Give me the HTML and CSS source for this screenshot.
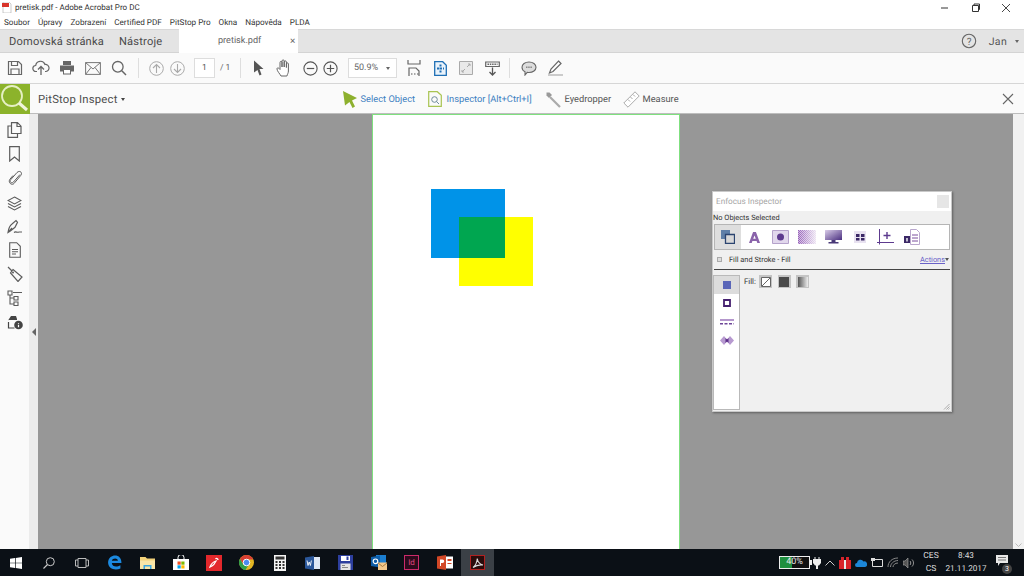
FILE: index.html
```html
<!DOCTYPE html>
<html lang="cs">
<head>
<meta charset="utf-8">
<title>pretisk.pdf - Adobe Acrobat Pro DC</title>
<link rel="stylesheet" href="styles.css">
</head>
<body>
<div class="app">
  <header class="titlebar">
    <svg class="pdficon" viewBox="0 0 10 11" width="10" height="11"><path d="M1 0h6l2 2v9H1z" fill="#fff" stroke="#aaa" stroke-width=".6"/><path d="M0 1h7v4H0z" fill="#d8342a"/></svg>
    <span class="apptitle">pretisk.pdf - Adobe Acrobat Pro DC</span>
    <div class="winctl">
      <svg width="10" height="10" viewBox="0 0 10 10"><path d="M1 5h7" stroke="#333"/></svg>
      <svg width="10" height="10" viewBox="0 0 10 10"><path d="M1.500 2.500h6v6h-6zM3 2.500V1h5.500v5.500H7.500" fill="none" stroke="#333"/></svg>
      <svg width="10" height="10" viewBox="0 0 10 10"><path d="M1 1l8 8M9 1l-8 8" stroke="#333" stroke-width=".9"/></svg>
    </div>
  </header>
  <nav class="menubar">
    <span>Soubor</span><span>Úpravy</span><span>Zobrazení</span><span>Certified PDF</span><span>PitStop Pro</span><span>Okna</span><span>Nápověda</span><span>PLDA</span>
  </nav>
  <div class="tabbar">
    <span class="tabhead home">Domovská stránka</span>
    <span class="tabhead tools">Nástroje</span>
    <div class="doctab"><span class="docname">pretisk.pdf</span><span class="docclose">×</span></div>
    <div class="tabright">
      <svg width="16" height="16" viewBox="0 0 16 16"><circle cx="8" cy="8" r="6.700" fill="none" stroke="#666" stroke-width="1.100"/><text x="8" y="11.500" text-anchor="middle" class="qmark">?</text></svg>
      <span class="user">Jan</span><span class="caret"></span>
    </div>
  </div>
  <div class="toolbar">
    <span class="tool"><svg width="16" height="16" viewBox="0 0 16 16"><path d="M1.500 1.500h10l3 3v10h-13zM4.500 1.500v4h6v-4M4 14.500v-5.500h8v5.500" fill="none" stroke="#666" stroke-width="1.200"/></svg></span>
    <span class="tool"><svg width="18" height="16" viewBox="0 0 18 16"><path d="M5 11.500H4a3 3 0 0 1-.3-6A4.800 4.800 0 0 1 13 4.500a3.500 3.500 0 0 1 1 7h-1" fill="none" stroke="#666" stroke-width="1.200"/><path d="M9 15V7M6 9.500L9 6.500l3 3" fill="none" stroke="#666" stroke-width="1.300"/></svg></span>
    <span class="tool"><svg width="16" height="16" viewBox="0 0 16 16"><path d="M4 1h8v4H4zM1 5.500h14v6h-3v3H4v-3H1z" fill="#666"/><path d="M5 10h6v3.500H5z" fill="#fff"/></svg></span>
    <span class="tool"><svg width="16" height="13" viewBox="0 0 16 13"><path d="M.6.600h14.800v11.800H.6zM.6.600L8 7l7.400-6.400M.6 12.400L6 5.500M15.400 12.400L10 5.500" fill="none" stroke="#777" stroke-width="1"/></svg></span>
    <span class="tool"><svg width="16" height="16" viewBox="0 0 16 16"><circle cx="6.800" cy="6.800" r="5.300" fill="none" stroke="#666" stroke-width="1.300"/><path d="M10.800 10.800L15 15" stroke="#666" stroke-width="1.500"/></svg></span>
    <span class="sep sep-a"></span>
    <span class="navbtn"><svg width="15" height="15" viewBox="0 0 15 15"><circle cx="7.500" cy="7.500" r="6.800" fill="none" stroke="#aaa"/><path d="M7.500 12V3.500M4 7l3.500-3.500L11 7" fill="none" stroke="#aaa" stroke-width="1.100"/></svg></span>
    <span class="navbtn"><svg width="15" height="15" viewBox="0 0 15 15"><circle cx="7.500" cy="7.500" r="6.800" fill="none" stroke="#aaa"/><path d="M7.500 3v8.500M4 8l3.500 3.500L11 8" fill="none" stroke="#aaa" stroke-width="1.100"/></svg></span>
    <span class="pagebox">1</span>
    <span class="pagetotal">/ 1</span>
    <span class="sep sep-b"></span>
    <span class="tool"><svg width="11" height="16" viewBox="0 0 11 16"><path d="M1 .500l9.500 8.500H6.500l2 5.500-2 1L4.500 10 1 12.500z" fill="#555"/></svg></span>
    <span class="tool"><svg width="17" height="18" viewBox="0 0 17 18"><path d="M5 17c-1-2-4-5-4-7s2-1 3 .5V3.500c0-1.500 2-1.500 2 0V8V2c0-1.500 2.200-1.500 2.200 0v6V3c0-1.500 2.200-1.500 2.200 0v5.500V5c0-1.500 2-1.500 2 0v7c0 2-1 3-1.500 5z" fill="#fff" stroke="#666" stroke-width="1"/></svg></span>
    <span class="zoomctl minus"><svg width="15" height="15" viewBox="0 0 15 15"><circle cx="7.500" cy="7.500" r="6.600" fill="none" stroke="#555" stroke-width="1.100"/><path d="M3.800 7.500h7.400" stroke="#555" stroke-width="1.200"/></svg></span>
    <span class="zoomctl"><svg width="15" height="15" viewBox="0 0 15 15"><circle cx="7.500" cy="7.500" r="6.600" fill="none" stroke="#555" stroke-width="1.100"/><path d="M3.800 7.500h7.400M7.500 3.800v7.400" stroke="#555" stroke-width="1.200"/></svg></span>
    <span class="zoombox"><span>50.9%</span><span class="caret"></span></span>
    <span class="tool fit"><svg width="14" height="18" viewBox="0 0 14 18"><path d="M1 1v4h12V1M2 17V9h7l3 3v5" fill="none" stroke="#666" stroke-width="1.200"/><path d="M4 15h1.500M7 15h1.500M10 15h1.500" stroke="#555"/></svg></span>
    <span class="tool"><svg width="13" height="15" viewBox="0 0 13 15"><path d="M.7.700h8l3.600 3.500v10.100H.700z" fill="#eaf3fb" stroke="#1f6fb5" stroke-width="1.300"/><path d="M6.500 3.500v8M3 7.500h7" stroke="#1f6fb5" stroke-width="2" stroke-dasharray="2 1"/></svg></span>
    <span class="tool"><svg width="14" height="14" viewBox="0 0 14 14"><path d="M.500.500h13v13H.500z" fill="#e9e9e9" stroke="#aaa"/><path d="M8 6l3-3M9 3h2v2M6 8l-3 3M5 11H3V9" fill="none" stroke="#aaa"/></svg></span>
    <span class="tool"><svg width="15" height="15" viewBox="0 0 15 15"><path d="M.700 1h13.600v4.500H.700z" fill="none" stroke="#666" stroke-width="1.200"/><path d="M2.500 3.200h10" stroke="#666" stroke-width="1.500" stroke-dasharray="1.500 .8"/><path d="M7.500 6.500v7.500M4.500 11l3 3 3-3" fill="none" stroke="#555" stroke-width="1.300"/></svg></span>
    <span class="sep sep-c"></span>
    <span class="tool"><svg width="16" height="15" viewBox="0 0 16 15"><path d="M8 1c4 0 7 2.300 7 5.300s-3 5.200-7 5.200c-.6 0-1.200 0-1.800-.2L4 14v-3.300C2 9.800 1 8.200 1 6.300 1 3.300 4 1 8 1z" fill="#ddd" stroke="#666" stroke-width="1.100"/><path d="M5 6.300h6" stroke="#888" stroke-width="1.500" stroke-dasharray="1.500 .7"/></svg></span>
    <span class="tool"><svg width="17" height="16" viewBox="0 0 17 16"><path d="M1 15h15" stroke="#bbb" stroke-width="1.500"/><path d="M11.500 1L14 3.500 6 11.500l-3.500 1.500L4 9z" fill="#fff" stroke="#666" stroke-width="1.200"/></svg></span>
  </div>
  <div class="inspectbar">
    <span class="logo"><svg width="30" height="30" viewBox="0 0 30 30"><circle cx="12" cy="12" r="10" fill="none" stroke="#e6f0c4" stroke-width="1.800"/><path d="M19 19l8 7" stroke="#f0f5dc" stroke-width="3"/></svg></span>
    <span class="inspecttitle">PitStop Inspect</span><span class="caret dark"></span>
    <div class="modes">
      <svg class="m1" width="14" height="17" viewBox="0 0 14 17"><path d="M0 0l14 7-5 2.500 3 6-2.500 1.500-3-6L2 14.500z" fill="#8db02e"/></svg>
      <span class="modelink t1">Select Object</span>
      <svg class="m2" width="14" height="16" viewBox="0 0 14 16"><path d="M.700.700h8.600l4 3.600v11H.700z" fill="none" stroke="#a9c452" stroke-width="1.200"/><circle cx="6.500" cy="8.500" r="2.800" fill="none" stroke="#6f8b9c"/><path d="M8.500 10.500l2.500 2.500" stroke="#6f8b9c"/></svg>
      <span class="modelink t2">Inspector [Alt+Ctrl+I]</span>
      <svg class="m3" width="17" height="17" viewBox="0 0 17 17"><path d="M1.500 1.500l3 0 2.500 2.500-3 3L1.500 4.500z" fill="#999"/><path d="M5 6l10 10" stroke="#aaa" stroke-width="2.200"/></svg>
      <span class="modegrey t3">Eyedropper</span>
      <svg class="m4" width="17" height="17" viewBox="0 0 17 17"><path d="M12 .800L16.200 5 5 16.200.800 12z" fill="#fff" stroke="#aaa"/><path d="M10 3.500l2 2M7.500 6l2 2M5 8.500l2 2" stroke="#aaa"/></svg>
      <span class="modegrey t4">Measure</span>
    </div>
    <svg class="closex" width="12" height="12" viewBox="0 0 12 12"><path d="M1 1l10 10M11 1L1 11" stroke="#666" stroke-width="1.100"/></svg>
  </div>
  <main class="workarea">
    <aside class="sidebar">
      <svg width="15" height="16" viewBox="0 0 15 16"><path d="M4.500 .700h6l3.500 3.500v7.300H4.500zM4.500 4H1v11.300h9.500v-3.800M10 1v3.500h4" fill="none" stroke="#5c5c5c" stroke-width="1.200"/></svg>
      <svg width="11" height="16" viewBox="0 0 11 16"><path d="M.700.700h9.600v14.300L5.500 11 .700 15z" fill="none" stroke="#5c5c5c" stroke-width="1.200"/></svg>
      <svg width="14" height="16" viewBox="0 0 14 16"><path d="M12 4.500L5.500 12c-2 2-4.500-.3-2.800-2.300L9 2.500c3-2.800 6 .5 3.700 3L6 13.500c-2 2.200-6-.5-4.300-4L5 5.500" fill="none" stroke="#5c5c5c" stroke-width="1"/></svg>
      <svg class="layers" width="15" height="15" viewBox="0 0 15 15"><path d="M7.500 1L14 4.500 7.500 8 1 4.500zM1 7.500L7.500 11 14 7.500M1 10.500L7.500 14 14 10.500" fill="none" stroke="#5c5c5c" stroke-width="1.100"/></svg>
      <svg width="16" height="15" viewBox="0 0 16 15"><path d="M1 13.500C1.500 10 3 6.500 5 5l4-3.500 1.500 1.800-2.500 5c-2 1.800-4.500 3.500-7 5.200zM5 9l-4 4.500M7 13.500c2-1.500 3 .5 5-.5h3" fill="none" stroke="#5c5c5c" stroke-width="1.200"/></svg>
      <svg width="12" height="16" viewBox="0 0 12 16"><path d="M.700.700h7l3.600 3.600v11H.700zM3 7.500h6M3 9.800h6M3 12h4" fill="none" stroke="#5c5c5c" stroke-width="1.100"/></svg>
      <svg width="16" height="16" viewBox="0 0 16 16"><path d="M6 3.500l9 7.500-4 4.500-7.500-8.500zM1 1l4 4" fill="none" stroke="#5c5c5c" stroke-width="1.200"/><circle cx="6" cy="6.500" r="1" fill="#5c5c5c"/></svg>
      <svg width="16" height="16" viewBox="0 0 16 16"><path d="M1 1h4v4H1zM7 6.500h4v3.500H7zM7 12h4v3.500H7zM3 5v3H7M3 8v6H7M6 2.500h9" fill="none" stroke="#5c5c5c" stroke-width="1.100"/></svg>
      <svg width="16" height="16" viewBox="0 0 16 16"><path d="M1 6.500L4 2h5l1 3v1H1z" fill="#444"/><path d="M1.500 8v6h6" fill="none" stroke="#444" stroke-width="1.200"/><circle cx="11.500" cy="11" r="4.300" fill="#444"/><path d="M11.500 9v.8M11.500 10.800v2.500" stroke="#fff" stroke-width="1.200"/></svg>
    </aside>
    <div class="collapse"><span class="tri"></span></div>
    <div class="canvas">
      <div class="page">
        <div class="sq blue"></div>
        <div class="sq yellow"></div>
        <div class="sq green"></div>
      </div>
      <section class="panel">
        <div class="phead"><span>Enfocus Inspector</span><span class="pclose"></span></div>
        <div class="pstatus">No Objects Selected</div>
        <div class="picons">
          <span class="pi active"><svg width="14" height="14" viewBox="0 0 14 14"><path d="M0 0h9v9H0z" fill="#5f7fa8"/><path d="M4.500 4.500h9v9h-9z" fill="#d8d8d8" stroke="#2b4470" stroke-width="1.300"/></svg></span>
          <span class="pi"><svg width="11" height="11" viewBox="0 0 13 13"><path d="M4.800 0h3.400L13 13H9.800l-.8-2.500H4L3.200 13H0zM6.500 4L5 8h3z" fill="#8a63aa"/></svg></span>
          <span class="pi"><svg width="17" height="14" viewBox="0 0 17 14"><path d="M.500.500h16v13H.500z" fill="#e1d7ec" stroke="#b5a2cb"/><circle cx="8.500" cy="7" r="3.500" fill="#5d3a8e"/></svg></span>
          <span class="pi"><svg width="18" height="14" viewBox="0 0 18 14"><defs><pattern id="chk" width="2" height="2" patternUnits="userSpaceOnUse"><path d="M0 0h1v1H0zM1 1h1v1H1z" fill="#8a4fb0"/></pattern><linearGradient id="fd"><stop offset="0" stop-color="#fff" stop-opacity=".1"/><stop offset="1" stop-color="#fff" stop-opacity=".85"/></linearGradient></defs><path d="M0 0h18v14H0z" fill="#c9aedd"/><path d="M0 0h18v14H0z" fill="url(#chk)"/><path d="M0 0h18v14H0z" fill="url(#fd)"/></svg></span>
          <span class="pi"><svg width="17" height="14" viewBox="0 0 17 14"><defs><linearGradient id="scr" x1="0" y1="0" x2="1" y2="1"><stop offset="0" stop-color="#d9cce8"/><stop offset="1" stop-color="#4a2f80"/></linearGradient></defs><path d="M0 0h17v10H0z" fill="url(#scr)"/><path d="M6.500 10h4v2h3v1.500h-10V12h3z" fill="#4a3a78"/></svg></span>
          <span class="pi"><svg width="12" height="12" viewBox="0 0 12 12"><path d="M0 0h12v12H0z" fill="#e8e2f0"/><path d="M2 3h3.500v3H2zM7 3h3.500v3H7zM2 7h3.500v2.500H2zM7 7h3.500v2.500H7z" fill="#3b2866"/></svg></span>
          <span class="pi"><svg width="17" height="16" viewBox="0 0 17 16"><path d="M2.500 0v15.500M0 13.500h17" stroke="#5d3a8e"/><path d="M10 3v7M6.500 6.500h7" stroke="#5d3a8e" stroke-width="1.400"/></svg></span>
          <span class="pi"><svg width="16" height="16" viewBox="0 0 16 16"><path d="M6.500.500h6l3 3v12h-9z" fill="#fff" stroke="#b9a7cd"/><path d="M8 6h6M8 9h6M8 12h6" stroke="#7b4f9e"/><path d="M0 7h6v7H0z" fill="#3b2866"/><path d="M2.300 9h1.400v3.500H2.300z" fill="#fff"/></svg></span>
        </div>
        <div class="psection">
          <span class="expander"></span>
          <span class="sectitle">Fill and Stroke - Fill</span>
          <span class="actions">Actions</span><span class="actcaret"></span>
        </div>
        <div class="pbody">
          <div class="prail">
            <span class="ri active"><svg width="8" height="8" viewBox="0 0 8 8"><path d="M0 0h8v8H0z" fill="#5a66b8"/></svg></span>
            <span class="ri"><svg width="8" height="8" viewBox="0 0 8 8"><path d="M1 1h6v6H1z" fill="#fff" stroke="#45206f" stroke-width="1.800"/></svg></span>
            <span class="ri"><svg width="14" height="6" viewBox="0 0 14 6"><path d="M0 1h14" stroke="#8c5fb0" stroke-width="1.300"/><path d="M0 4.800h14" stroke="#6d4697" stroke-width="1.500" stroke-dasharray="3 1.500"/></svg></span>
            <span class="ri"><svg width="14" height="9" viewBox="0 0 14 9"><path d="M0 4.500L4 0l3 3.500L10 0l4 4.500L10 9 7 5.500 4 9z" fill="#b79ad0"/><path d="M5.500 2L7 3.500 8.500 2v5L7 5.500 5.500 7z" fill="#5b2c87"/></svg></span>
          </div>
          <div class="pfill">
            <span class="filllabel">Fill:</span>
            <span class="sw swn"><svg width="10" height="10" viewBox="0 0 10 10"><path d="M.500.500h9v9h-9z" fill="#fff" stroke="#666"/><path d="M1 9l8-8" stroke="#666"/></svg></span>
            <span class="sw swd"><svg width="10" height="10" viewBox="0 0 10 10"><path d="M0 0h10v10H0z" fill="#4a4a4a"/></svg></span>
            <span class="sw swg"><svg width="10" height="10" viewBox="0 0 10 10"><defs><linearGradient id="gr"><stop offset="0" stop-color="#555"/><stop offset="1" stop-color="#eee"/></linearGradient></defs><path d="M0 0h10v10H0z" fill="url(#gr)"/></svg></span>
          </div>
        </div>
        <svg class="grip" width="7" height="7" viewBox="0 0 7 7"><path d="M6.500 1L1 6.500M6.500 3.500L3.500 6.500M6.500 5.500L5.500 6.500" stroke="#aaa"/></svg>
      </section>
    </div>
    <div class="scrollrail"><svg width="7" height="4" viewBox="0 0 7 4"><path d="M.5.500L3.500 3.500 6.500.500" fill="none" stroke="#bbb"/></svg></div>
  </main>
  <footer class="taskbar">
    <span class="tb start"><svg width="12" height="12" viewBox="0 0 12 12"><path d="M0 1.700L5 1v4.700H0zM5.700.9L12 0v5.700H5.700zM0 6.300h5V11L0 10.300zM5.700 6.300H12V12l-6.300-.9z" fill="#fff"/></svg></span>
    <span class="tb"><svg width="12" height="12" viewBox="0 0 12 12"><circle cx="7.300" cy="4.700" r="4" fill="none" stroke="#ccc"/><path d="M4.500 7.500L.5 11.500" stroke="#ccc" stroke-width="1.100"/></svg></span>
    <span class="tb"><svg width="14" height="10" viewBox="0 0 14 10"><path d="M3 .5h8v9H3zM3 2H.5v6H3M11 2h2.500v6H11" fill="none" stroke="#bbb"/></svg></span>
    <span class="tb"><svg width="15" height="15" viewBox="0 0 14 14"><path d="M1 6.500C1.500 2.500 4.500.5 7.500.5c3.500 0 6 2.500 6 7H4.500c.3 3.800 5 4 8 2v3c-4 2-11.500 1.300-11.500-6zM4.500 5.300h5.700c-.2-2.800-5-2.800-5.700 0z" fill="#1c8ae0"/></svg></span>
    <span class="tb"><svg width="15" height="13" viewBox="0 0 15 13"><path d="M0 1h5.500l1.500 1.500h8V13H0z" fill="#f3d27a"/><path d="M0 4.500h15V13H0z" fill="#f9e6a8"/><path d="M3.500 9h8v4h-1.500v-2.500H5V13H3.500z" fill="#3ba6e0"/></svg></span>
    <span class="tb"><svg width="16" height="15" viewBox="0 0 16 15"><path d="M0 4h16v11H0z" fill="#fff"/><path d="M5 4V2.500a3 3 0 0 1 6 0V4" fill="none" stroke="#fff"/><path d="M4.500 6.500h3.200v3.200H4.500z" fill="#f25022"/><path d="M8.300 6.500h3.200v3.200H8.300z" fill="#7fba00"/><path d="M4.500 10.300h3.200v3.200H4.500z" fill="#00a4ef"/><path d="M8.300 10.300h3.200v3.200H8.300z" fill="#ffb900"/></svg></span>
    <span class="tb"><svg width="16" height="16" viewBox="0 0 16 16"><path d="M0 0h16v16H0z" fill="#e3282c"/><path d="M4 12c1-3 3-5 6-6-1 2-2 4-4 5zM9.500 4c1-1 2.500-.5 2.500 1" fill="none" stroke="#fff" stroke-width="1.300"/></svg></span>
    <span class="tb"><svg width="15" height="15" viewBox="0 0 15 15"><circle cx="7.500" cy="7.500" r="7.500" fill="#e3b623"/><path d="M7.500 0a7.500 7.500 0 0 0-6.500 3.800l3 5.200 3.500-4.500h6.800A7.500 7.500 0 0 0 7.500 0z" fill="#d93f33"/><path d="M1 3.800A7.500 7.500 0 0 0 6.500 15l3-5H4.500z" fill="#2f9e4a"/><circle cx="7.500" cy="7.500" r="3.300" fill="#4b8bef" stroke="#fff"/></svg></span>
    <span class="tb"><svg width="12" height="16" viewBox="0 0 12 16"><path d="M0 0h12v16H0z" fill="#f5f5f5"/><path d="M1.500 1.500h9v3h-9z" fill="#333"/><path d="M1.500 6h2v2h-2zM5 6h2v2H5zM8.500 6h2v2h-2zM1.500 9h2v2h-2zM5 9h2v2H5zM8.500 9h2v2h-2zM1.500 12h2v2h-2zM5 12h2v2H5zM8.500 12h2v2h-2z" fill="#333"/></svg></span>
    <span class="tb"><svg width="15" height="14" viewBox="0 0 15 14"><path d="M7 1h8v12H7z" fill="#dfe8f5"/><path d="M0 1.500L9 0v14L0 12.500z" fill="#2b579a"/><path d="M2 4.500l1 5 1.200-3.500 1.200 3.500 1-5" fill="none" stroke="#fff" stroke-width=".9"/></svg></span>
    <span class="tb"><svg width="15" height="15" viewBox="0 0 15 15"><path d="M0 0h15v15H0z" fill="#2d3f9e"/><path d="M3 1h9v5H3z" fill="#fff"/><path d="M8.500 1.500h2v3.500h-2z" fill="#2d3f9e"/><path d="M2.500 8.500h10V15h-10z" fill="#e5e5e5"/><path d="M4 10.500h3M4 12.500h6" stroke="#888"/></svg></span>
    <span class="tb"><svg width="16" height="15" viewBox="0 0 16 15"><path d="M5 0h10v8H5z" fill="#1b7ed0"/><path d="M0 2l9-1.500v12L0 11z" fill="#0f5ea8"/><circle cx="4.500" cy="6.300" r="2.300" fill="none" stroke="#fff" stroke-width="1.200"/><path d="M7 7.500h9V15H7z" fill="#f2c88c"/><path d="M7 8l4.500 3.500L16 8" fill="none" stroke="#a87b3e"/></svg></span>
    <span class="tb"><span class="indd">Id</span></span>
    <span class="tb"><svg width="16" height="15" viewBox="0 0 16 15"><path d="M7 1.500h9v12H7z" fill="#fff"/><path d="M0 1.500L9 0v15L0 13.500z" fill="#d24726"/><path d="M3 4.500h2.500a1.500 1.500 0 0 1 0 3.500H4v3H3z" fill="#fff"/><path d="M10.500 4h4v2h-4zM10.500 8h4v1h-4z" fill="#d24726"/></svg></span>
    <span class="tb current"><span class="acro"><svg width="12" height="12" viewBox="0 0 12 12"><path d="M1 10.500C3 9 5 5 5.300 1.500c.3 3 2 5.500 5.700 6.500-3.500-.5-6.500 0-10 2.500z" fill="none" stroke="#ddd" stroke-width="1.100"/></svg></span></span>
    <div class="tray">
      <span class="battery"><span class="batfill"></span><span class="batlabel">40%</span></span><span class="batnub"></span>
      <svg class="trayicon" width="8" height="12" viewBox="0 0 8 12"><path d="M0 2h8v4l-2 2.500H5V12H3V8.500H2L0 6zM1.500 0h1v2h-1zM5.500 0h1v2h-1z" fill="#eee"/></svg>
      <svg class="trayicon" width="10" height="6" viewBox="0 0 10 6"><path d="M.5 5.500L5 1l4.500 4.500" fill="none" stroke="#ccc"/></svg>
      <svg class="trayicon" width="12" height="12" viewBox="0 0 12 12"><path d="M0 3h12v9H0z" fill="#d8232a"/><path d="M5 3h2v9H5z" fill="#e9e9e9"/><path d="M2 0h3v3H2zM7 0h3v3H7z" fill="#d8232a"/></svg>
      <svg class="trayicon" width="12" height="8" viewBox="0 0 12 8"><path d="M2 8a2 2 0 0 1 0-4 3.500 3.500 0 0 1 6.500-1.500A2.800 2.800 0 0 1 10 8z" fill="#1c86d8"/></svg>
      <svg class="trayicon" width="12" height="9" viewBox="0 0 12 9"><path d="M1.500 1.500h10v7h-10z" fill="none" stroke="#ddd"/><path d="M0 0h4v3H0z" fill="#ddd"/></svg>
      <svg class="trayicon" width="12" height="11" viewBox="0 0 12 11"><path d="M1 10C1 5 5 1 11 1M3.500 10c0-3 3-6.500 7.500-6.500M6 10c0-2 2-4 5-4" fill="none" stroke="#888"/></svg>
      <svg class="trayicon" width="12" height="10" viewBox="0 0 12 10"><path d="M0 3h2l3-3v10L2 7H0z" fill="#555" stroke="#aaa" stroke-width=".6"/><path d="M7 3c1 1 1 3 0 4M9 1.500c2 2 2 5 0 7" fill="none" stroke="#999"/></svg>
      <div class="lang"><span>CES</span><span>CS</span></div>
      <div class="clock"><span>8:43</span><span>21.11.2017</span></div>
      <span class="notif"><svg width="12" height="11" viewBox="0 0 12 11"><path d="M0 0h12v8H4L2 11V8H0z" fill="#e8e8e8"/><path d="M2 2.500h8M2 5h8" stroke="#777"/></svg><span class="badge">3</span></span>
    </div>
  </footer>
</div>
</body>
</html>
```

FILE: styles.css
```css
* { box-sizing: border-box; }
html, body { margin: 0; padding: 0; }
body { width: 1024px; height: 576px; overflow: hidden; font-family: Roboto, "Open Sans", sans-serif; color: #444; background: #fff; text-rendering: geometricPrecision; }
svg { display: block; flex: none; }
.app { width: 1024px; height: 576px; display: flex; flex-direction: column; }

.titlebar { height: 15px; display: flex; align-items: center; padding-left: 2px; background: #fff; }
.pdficon { margin-right: 3px; }
.apptitle { font-size: 8.050px; color: #333; }
.winctl { margin-left: auto; display: flex; gap: 20.500px; padding-right: 13px; }

.menubar { height: 14px; display: flex; align-items: center; padding-left: 4px; gap: 8px; font-size: 8.150px; color: #333; background: #fff; }

.tabbar { height: 24px; display: flex; align-items: center; background: #e4e4e4; border-top: 1px solid #d8d8d8; border-bottom: 1px solid #d4d4d4; }
.tabhead { font-size: 11.100px; color: #4a4a4a; letter-spacing: .2px; white-space: nowrap; }
.home { width: 110px; margin-left: 9px; flex: none; }
.tools { width: 60px; flex: none; }
.doctab { width: 119px; height: 24px; background: #fff; display: flex; align-items: center; flex: none; }
.docname { width: 72px; margin-left: 39px; font-size: 9.100px; color: #666; flex: none; }
.docclose { font-size: 10px; color: #666; }
.tabright { margin-left: auto; display: flex; align-items: center; padding-right: 5px; }
.qmark { font-family: Roboto, sans-serif; font-size: 10px; fill: #666; }
.user { margin-left: 12px; font-size: 10.500px; color: #555; letter-spacing: .3px; }
.caret { display: inline-block; width: 0; height: 0; border-left: 2.500px solid transparent; border-right: 2.500px solid transparent; border-top: 3px solid #666; }
.tabright .caret { margin-left: 8px; }
.caret.dark { border-top-color: #444; margin-left: 3px; }

.toolbar { height: 31px; display: flex; align-items: center; padding-left: 2px; background: #fafafa; border-bottom: 1px solid #d6d6d6; }
.tool { width: 26px; height: 20px; display: flex; align-items: center; justify-content: center; flex: none; }
.sep { width: 1px; height: 20px; background: #dedede; flex: none; }
.sep-a { margin-left: 6px; margin-right: 7px; }
.navbtn { width: 21px; display: flex; justify-content: center; flex: none; }
.pagebox { width: 21px; height: 20px; margin-left: 6px; border: 1px solid #ddd; background: #fff; font-size: 8.500px; color: #555; display: flex; align-items: center; justify-content: center; flex: none; }
.pagetotal { margin-left: 5px; width: 20px; font-size: 8.500px; color: #666; flex: none; }
.sep-b { margin-right: 4px; }
.zoomctl { width: 20px; display: flex; justify-content: center; flex: none; }
.minus { margin-left: 3px; }
.zoombox { width: 49px; height: 20px; margin-left: 8px; border: 1px solid #ddd; background: #fff; font-size: 9px; color: #666; display: flex; align-items: center; justify-content: space-between; padding: 0 6px 0 5px; flex: none; }
.fit { margin-left: 4px; }
.sep-c { margin-left: 4px; margin-right: 6px; }

.inspectbar { height: 30px; display: flex; align-items: center; background: #fafafa; border-bottom: 1px solid #bdbdbd; padding-top: 1px; }
.logo { width: 30px; height: 30px; background: #8cb32b; flex: none; align-self: flex-start; margin-top: -1px; }
.inspecttitle { margin-left: 8px; font-size: 11.300px; color: #4d4d4d; letter-spacing: .2px; white-space: nowrap; }
.modes { display: flex; align-items: center; margin-left: 218px; }
.modelink { font-size: 9.300px; color: #3d7fc1; white-space: nowrap; }
.modegrey { font-size: 9.300px; color: #555; white-space: nowrap; }
.t1 { margin-left: 4px; width: 54px; }
.m2 { margin-left: 13px; }
.t2 { margin-left: 5px; width: 87px; }
.m3 { margin-left: 11px; }
.t3 { margin-left: 3px; width: 47px; }
.m4 { margin-left: 11px; }
.t4 { margin-left: 3px; }
.closex { margin-left: auto; margin-right: 10px; }

.workarea { flex: 1; min-height: 0; display: flex; }
.sidebar { width: 29px; background: #fafafa; display: flex; flex-direction: column; align-items: center; gap: 8px; padding-top: 8px; flex: none; }
.layers { margin-top: 2px; }
.collapse { width: 9px; background: #ececec; display: flex; justify-content: center; align-items: flex-start; padding-top: 214px; flex: none; }
.tri { width: 0; height: 0; border-top: 4px solid transparent; border-bottom: 4px solid transparent; border-right: 4px solid #666; }
.canvas { flex: 1; position: relative; background: #979797; overflow: hidden; }
.scrollrail { width: 11px; background: #f1f1f1; flex: none; display: flex; align-items: flex-end; justify-content: center; padding-bottom: 2px; }

.page { position: absolute; left: 334px; top: 0; width: 308px; height: 435px; background: #fff; border: 1px solid #7fe07f; border-bottom: 0; }
.sq { position: absolute; }
.blue { left: 58px; top: 74px; width: 74px; height: 69px; background: #0093e8; }
.yellow { left: 86px; top: 102px; width: 74px; height: 69px; background: #ffff00; }
.green { left: 86px; top: 102px; width: 46px; height: 41px; background: #00a650; }

.panel { position: absolute; left: 674px; top: 77px; width: 240px; height: 221px; background: #f0f0f0; border: 1px solid #c9c9c9; box-shadow: 1px 1px 2px rgba(60,60,60,.6); display: flex; flex-direction: column; }
.phead { height: 19px; background: #fff; display: flex; align-items: center; justify-content: space-between; padding: 0 2px 0 3px; font-size: 8.200px; color: #a5a5a5; flex: none; }
.pclose { width: 12px; height: 13px; background: #e6e6e6; }
.pstatus { height: 13px; font-size: 7.400px; color: #333; padding: 1px 0 0 0; line-height: 12px; flex: none; white-space: nowrap; }
.picons { height: 26px; margin: 0 1px; border: 1px solid #b5b5b5; background: #fff; display: flex; align-items: center; flex: none; }
.pi { width: 26.300px; height: 24px; display: flex; align-items: center; justify-content: center; flex: none; }
.pi.active { background: #dedede; }
.psection { height: 20px; display: flex; align-items: center; margin: 0 1px; border-bottom: 1px solid #444; flex: none; }
.expander { width: 5px; height: 5px; margin-left: 3px; border: 1px solid #aaa; background: #ddd; }
.sectitle { margin-left: 7px; font-size: 7.400px; color: #333; }
.actions { margin-left: auto; font-size: 7.400px; color: #6a62c8; text-decoration: underline; }
.actcaret { width: 0; height: 0; margin-right: 1px; border-left: 2.500px solid transparent; border-right: 2.500px solid transparent; border-top: 3px solid #555; }
.pbody { flex: 1; display: flex; min-height: 0; padding: 5px 0 1px 0; }
.prail { width: 27px; background: #fff; border: 1px solid #b9b9b9; display: flex; flex-direction: column; flex: none; }
.ri { height: 18.500px; display: flex; align-items: center; justify-content: center; flex: none; }
.ri.active { height: 18px; background: #dcdcdc; }
.pfill { display: flex; align-items: flex-start; padding: 0 0 0 4px; }
.filllabel { font-size: 7.800px; color: #333; line-height: 13px; width: 15px; }
.sw { width: 13px; height: 13px; background: #c4c4c4; display: flex; align-items: center; justify-content: center; margin-right: 5.500px; }
.grip { position: absolute; right: 1px; bottom: 1px; }

.taskbar { height: 27px; background: #0b1016; display: flex; align-items: center; flex: none; }
.tb { width: 33px; height: 27px; display: flex; align-items: center; justify-content: center; flex: none; }
.tb.start { width: 32px; }
.current { background: #3b4046; }
.indd { width: 15px; height: 15px; background: #2d0a1c; border: 1px solid #cc2a6a; color: #e0467f; font-size: 8px; display: flex; align-items: center; justify-content: center; line-height: 1; }
.acro { width: 15px; height: 15px; background: #2a0c0c; border: 1px solid #b02020; display: flex; align-items: center; justify-content: center; }
.tray { margin-left: auto; display: flex; align-items: center; height: 27px; color: #ddd; padding-right: 12px; }
.battery { width: 31px; height: 13px; border: 1px solid #eee; position: relative; display: block; background: #111; }
.batfill { position: absolute; left: 0; top: 0; bottom: 0; width: 12px; background: #1f8f3f; }
.batlabel { position: relative; display: block; text-align: center; font-size: 9px; line-height: 11px; color: #e8e8e8; }
.batnub { width: 2px; height: 5px; background: #eee; margin-right: 1px; }
.trayicon { margin-right: 4px; }
.lang { display: flex; flex-direction: column; align-items: center; width: 20px; margin-left: 2px; font-size: 8.500px; line-height: 13px; }
.clock { display: flex; flex-direction: column; align-items: center; width: 40px; margin-left: 5px; font-size: 8.200px; line-height: 13px; }
.notif { margin-left: 6px; position: relative; width: 20px; height: 22px; padding: 3px 0 0 4px; }
.badge { position: absolute; right: 0; bottom: 0; width: 10px; height: 10px; border-radius: 50%; background: #444; color: #fff; font-size: 7px; line-height: 10px; text-align: center; }
```
